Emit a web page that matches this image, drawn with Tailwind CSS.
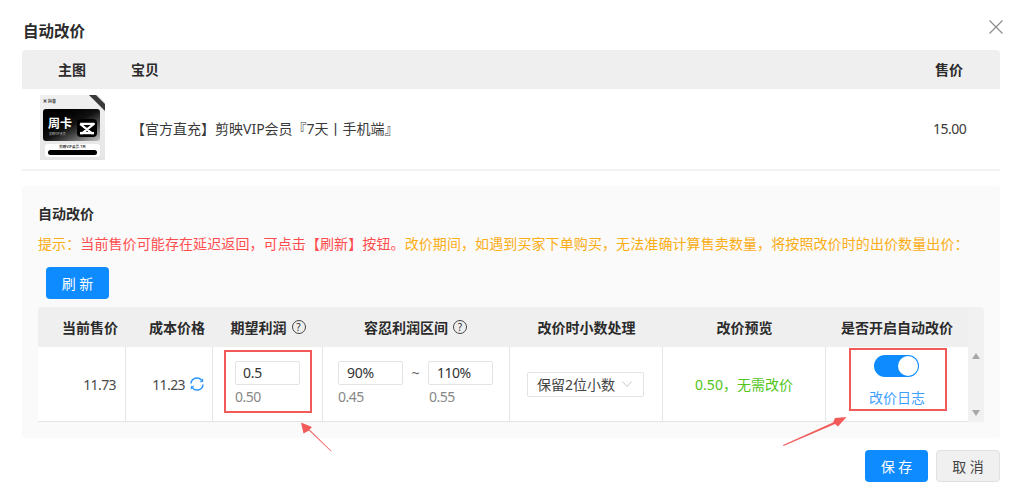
<!DOCTYPE html>
<html lang="zh-CN">
<head>
  <meta charset="UTF-8" />
  <title>自动改价</title>
  <script src="https://cdn.jsdelivr.net/npm/@tailwindcss/browser@4"></script>
</head>
<body class="relative w-[1024px] h-[491px] overflow-hidden bg-white text-[#333] text-[14px] font-['Noto_Sans','Noto_Sans_CJK_SC',sans-serif]">

  <!-- Close -->
  <svg class="absolute left-[989px] top-[20px] w-[14px] h-[14px]" viewBox="0 0 14 14" fill="none" stroke="#8c8c8c" stroke-width="1.2">
    <path d="M.5.5l13 13M13.500.5l-13 13"/>
  </svg>

  <div class="flex flex-col pl-[22px] pr-[24px]">
    <h1 class="h-[50px] pt-[18px] pl-px text-[15.5px] leading-[26px] font-semibold text-[#2b2b2b]">自动改价</h1>

    <!-- Product table -->
    <div class="grid grid-cols-[109px_1fr_78px] h-[39px] items-center bg-[#efefef] rounded-t-[4px] font-semibold text-[#2b2b2b]">
      <div class="pl-[36px]">主图</div>
      <div>宝贝</div>
      <div class="pl-[13px]">售价</div>
    </div>
    <div class="grid grid-cols-[109px_1fr_78px] h-[82px] items-center border-b-2 border-[#f3f3f3]">
      <div class="pl-[18px] pb-[3px]">
        <!-- Product thumbnail -->
        <div class="relative w-[65px] h-[65px] bg-gradient-to-b from-[#f0f0f0] to-[#e6e6e6] overflow-hidden">
          <div class="absolute left-[3px] top-[4px] text-[4px] leading-[5px] font-semibold text-[#333]">▣ 抖音</div>
          <div class="absolute left-[3px] top-[14px] w-[57px] h-[32px] rounded-[3px] bg-gradient-to-br from-black via-[#111] to-[#c4c4c4]">
            <div class="pl-[5px] pt-[8px] text-[12px] leading-[14px] font-semibold text-white">周卡</div>
            <div class="pl-[6px] text-[3px] leading-[6px] text-[#bbb]">剪映VIP会员</div>
            <div class="absolute right-[3px] top-[10px] flex items-center justify-center w-[20px] h-[18px] rounded-[4px] bg-black">
              <svg class="w-[16px] h-[13px]" viewBox="0 0 14 11" fill="none" stroke="#fff" stroke-width="2" stroke-linejoin="round"><path d="M1 1.500H13L3 9.500H1M13 9.500H11L1 1.500"/><path d="M1 9.500H13"/></svg>
            </div>
          </div>
          <div class="absolute left-[5px] top-[49px] w-[55px] h-[13px] rounded-[3px] bg-white">
            <div class="text-center text-[3.5px] leading-[6px] font-semibold">剪映VIP会员-7天</div>
            <div class="mx-[3px] h-[5px] rounded-full bg-black"></div>
          </div>
          <div class="absolute left-[44px] top-[4px] w-[30px] h-[5px] rotate-45 bg-[#3a3a3a]"></div>
          <div class="absolute left-[48px] top-[-2px] w-[30px] h-[6px] rotate-45 bg-white"></div>
        </div>
      </div>
      <div class="text-[#3a3a3a] pb-[1px]">【官方直充】剪映VIP会员『7天丨手机端』</div>
      <div class="pl-[11px] pb-[1px] text-[#3a3a3a] tracking-[-0.5px]">15.00</div>
    </div>

    <!-- Auto pricing panel -->
    <div class="flex flex-col mt-[15px] h-[252px] pl-[16px] pr-[16px] bg-[#fafafa] rounded-[4px]">
      <div class="pt-[16px] h-[42px] leading-[24px] font-semibold text-[#2b2b2b]">自动改价</div>
      <div class="h-[39px] leading-[32px] whitespace-nowrap tracking-[0.1px] text-[#faad14]">提示：<span class="text-[#ff4d4f]">当前售价可能存在延迟返回，可点击【刷新】按钮。</span>改价期间，如遇到买家下单购买，无法准确计算售卖数量，将按照改价时的出价数量出价：</div>
      <button class="ml-[8px] w-[63px] h-[32px] rounded-[4px] bg-[#0d8bff] text-white">刷 新</button>

      <div class="grid grid-cols-[88px_87px_110px_187px_153px_163px_142px_16px] mt-[8px]">
        <div class="flex items-center justify-end h-[40px] pr-[8px] bg-[#efefef] rounded-tl-[4px] font-semibold text-[#2b2b2b]">当前售价</div>
        <div class="flex items-center justify-end h-[40px] pr-[8px] bg-[#efefef] font-semibold text-[#2b2b2b]">成本价格</div>
        <div class="flex items-center justify-center gap-[5px] h-[40px] bg-[#efefef] font-semibold text-[#2b2b2b]">期望利润
          <span class="flex items-center justify-center w-[14px] h-[14px] rounded-full border border-[#444] text-[10px] font-normal leading-none">?</span>
        </div>
        <div class="flex items-center justify-center gap-[5px] h-[40px] pr-[2px] bg-[#efefef] font-semibold text-[#2b2b2b]">容忍利润区间
          <span class="flex items-center justify-center w-[14px] h-[14px] rounded-full border border-[#444] text-[10px] font-normal leading-none">?</span>
        </div>
        <div class="flex items-center justify-center h-[40px] bg-[#efefef] font-semibold text-[#2b2b2b]">改价时小数处理</div>
        <div class="flex items-center justify-center h-[40px] bg-[#efefef] font-semibold text-[#2b2b2b]">改价预览</div>
        <div class="flex items-center justify-center h-[40px] bg-[#efefef] font-semibold text-[#2b2b2b]">是否开启自动改价</div>
        <div class="h-[40px] bg-[#f1f1f1] rounded-tr-[4px]"></div>

        <div class="flex items-center justify-end h-[75px] pr-[9px] bg-white border-r border-b border-[#e5e5e5] text-[#4a4a4a] tracking-[-0.6px]">11.73</div>
        <div class="flex items-center justify-end gap-[5px] h-[75px] pr-[8px] bg-white border-r border-b border-[#e5e5e5] text-[#4a4a4a] tracking-[-0.6px]">11.23
          <svg class="w-[14px] h-[14px]" viewBox="0 0 14 14" fill="none" stroke="#2f96ff" stroke-width="1.500"><path d="M1 6.500A6 6 0 0 1 11.500 3M13 7.500A6 6 0 0 1 2.500 11"/><path d="M13 1.800v3h-3zM1 12.200v-3h3z" fill="#2f96ff" stroke-width=".5"/></svg>
        </div>
        <div class="flex flex-col justify-center h-[75px] pl-[22px] bg-white border-r border-b border-[#e5e5e5]">
          <div class="w-[65px] h-[24px] pl-[7px] bg-white border border-[#e3e3e3] rounded-[2px] leading-[22px] text-[#333] tracking-[-0.3px]">0.5</div>
          <div class="mt-[1px] leading-[22px] text-[#888] tracking-[-0.5px]">0.50</div>
        </div>
        <div class="flex flex-col justify-center h-[75px] pl-[15px] bg-white border-r border-b border-[#e5e5e5]">
          <div class="flex items-center">
            <div class="w-[65px] h-[24px] pl-[8px] border border-[#e3e3e3] rounded-[2px] leading-[22px] text-[#333] tracking-[-0.3px]">90%</div>
            <div class="w-[25px] text-center text-[#666]">~</div>
            <div class="w-[65px] h-[24px] pl-[8px] border border-[#e3e3e3] rounded-[2px] leading-[22px] text-[#333] tracking-[-0.5px]">110%</div>
          </div>
          <div class="flex mt-[1px] leading-[22px] text-[#888] tracking-[-0.5px]">
            <div class="w-[91px]">0.45</div>
            <div>0.55</div>
          </div>
        </div>
        <div class="flex items-center h-[75px] pl-[17px] bg-white border-r border-b border-[#e5e5e5]">
          <div class="flex items-center justify-between w-[117px] h-[25px] pl-[9px] pr-[11px] border border-[#e3e3e3] rounded-[2px] text-[#444]">保留2位小数
            <svg class="w-[10px] h-[6px]" viewBox="0 0 10 6" fill="none" stroke="#c8c8c8"><path d="M.5.500l4.500 5 4.500-5"/></svg>
          </div>
        </div>
        <div class="flex items-center justify-center h-[75px] bg-white border-r border-b border-[#e5e5e5] text-[#52c41a]">0.50，无需改价</div>
        <div class="flex flex-col items-center h-[75px] pt-[8px] bg-white border-b border-[#e5e5e5]">
          <div class="flex items-center justify-end w-[45px] h-[22px] mr-[1px] pr-px rounded-full bg-[#0d8bff]">
            <div class="w-[20px] h-[20px] rounded-full bg-white"></div>
          </div>
          <div class="mt-[10px] leading-[22px] text-[#3f9eff]">改价日志</div>
        </div>
        <div class="flex flex-col items-center justify-between h-[75px] py-[6px] bg-[#f1f1f1]">
          <div class="w-0 h-0 border-x-[4px] border-x-transparent border-b-[6px] border-b-[#a8a8a8]"></div>
          <div class="w-0 h-0 border-x-[4px] border-x-transparent border-t-[6px] border-t-[#a8a8a8]"></div>
        </div>
      </div>
    </div>

    <!-- Footer buttons -->
    <div class="flex justify-end gap-[8px] mt-[12px]">
      <button class="w-[63px] h-[32px] rounded-[4px] bg-[#0d8bff] text-white">保 存</button>
      <button class="w-[64px] h-[32px] rounded-[4px] bg-[#f0f0f0] border border-[#e0e0e0] text-[#444]">取 消</button>
    </div>
  </div>

  <!-- Annotations drawn over the screenshot -->
  <div class="absolute left-[224px] top-[350px] w-[88px] h-[63px] border-2 border-[#f25a5a]"></div>
  <div class="absolute left-[849px] top-[348px] w-[98px] h-[63px] border-2 border-[#f25a5a]"></div>
  <svg class="absolute left-0 top-0 w-[1024px] h-[491px] pointer-events-none" viewBox="0 0 1024 491" fill="#f25a5a" stroke="none">
    <path d="M331 451.500L309 430.500L303.500 433.500L301 422.500L312 427L309.500 429.500L331.500 451Z"/>
    <path d="M783 445L833 422.500L835 418L846.500 417L838 426.500L835 424L783.500 446Z"/>
  </svg>
</body>
</html>
